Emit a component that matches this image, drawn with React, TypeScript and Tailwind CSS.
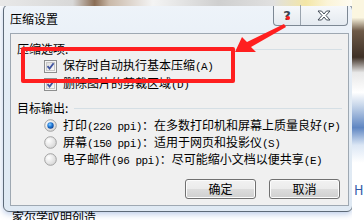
import * as React from "react";

const cjk = "font-[family-name:'Noto_Sans_CJK_SC',sans-serif]";
const mono = "font-[family-name:'Liberation_Mono','Noto_Sans_CJK_SC',monospace] text-[11px] tracking-[-0.5px]";

function CheckBox() {
  return (
    <svg width="13" height="13" viewBox="0 0 13 13" className="shrink-0">
      <defs>
        <linearGradient id="cbg" x1="0" y1="0" x2="1" y2="1">
          <stop offset="0" stopColor="#dcdcdc" />
          <stop offset="1" stopColor="#fbfbfb" />
        </linearGradient>
      </defs>
      <rect x="0.5" y="0.5" width="12" height="12" fill="#f4f4f4" stroke="#8e8f8f" />
      <rect x="2.5" y="2.5" width="8" height="8" fill="url(#cbg)" stroke="#c8c8c8" />
      <path d="M3.5 6.2 L5.6 8.6 L9.6 3.2" fill="none" stroke="#3f54a0" strokeWidth="1.8" />
    </svg>
  );
}

function Radio({ on }: { on?: boolean }) {
  return (
    <svg width="13" height="13" viewBox="0 0 13 13" className="shrink-0">
      <defs>
        <radialGradient id="rdOff" cx="0.35" cy="0.35" r="0.8">
          <stop offset="0" stopColor="#ffffff" />
          <stop offset="1" stopColor="#d0d0d0" />
        </radialGradient>
        <radialGradient id="rdOn" cx="0.4" cy="0.35" r="0.7">
          <stop offset="0" stopColor="#8fd0ff" />
          <stop offset="0.5" stopColor="#1f7ad8" />
          <stop offset="1" stopColor="#0b3c8c" />
        </radialGradient>
      </defs>
      <circle cx="6.5" cy="6.5" r="5.8" fill="url(#rdOff)" stroke="#a2a2a2" />
      {on && <circle cx="6.5" cy="6.5" r="3.2" fill="url(#rdOn)" />}
    </svg>
  );
}

function Button({ label }: { label: string }) {
  return (
    <button className="w-[71px] h-[20px] rounded-[3px] border border-[#707070] bg-[linear-gradient(#f2f2f2_0%,#ebebeb_50%,#dddddd_50%,#cfcfcf_100%)] shadow-[inset_0_0_0_1px_#fcfcfc] flex items-center justify-center text-[12px] text-black leading-none">
      {label}
    </button>
  );
}

function GroupTitle({ text }: { text: string }) {
  return (
    <div className="h-[16px] flex items-center pl-[6px] pr-[6px]">
      <span className="text-[12px] leading-[16px]">{text}</span>
      <div className="flex-1 h-px bg-[#d5dfe5] ml-[6px]" />
    </div>
  );
}

export default function App() {
  return (
    <div className={`relative w-[364px] h-[220px] overflow-hidden bg-white ${cjk} text-black`}>
      {/* desktop behind the dialog */}
      <div className="absolute left-0 top-0 w-[364px] h-[6px] bg-[linear-gradient(90deg,#e8e8e8_0%,#d8d8d8_20%,#8a6d55_26%,#c9b8a8_30%,#f4f4f4_42%,#cfcfcf_60%,#e0e0e0_75%,#f3e6a6_84%,#fbf4d8_90%,#ffffff_100%)]" />
      <div className="absolute right-0 top-0 w-[12px] h-[220px] bg-[linear-gradient(#fbf6e0_0%,#fbf6e0_8%,#6e5a48_14%,#3e3026_26%,#e8e8e8_33%,#ffffff_42%,#c7d6ea_48%,#5f86c2_58%,#dce7f5_66%,#ffffff_74%,#ffffff_100%)]" />
      <div className="absolute left-[354px] top-[183px] text-[13px] leading-none text-[#2f5aa8]">H</div>
      <div className="absolute left-[12px] top-[209px] text-[12px] leading-[16px] text-black">家尔学叹明创造</div>

      {/* dialog window */}
      <div className="ml-[3px] mt-[4px] w-[350px] h-[208px] rounded-[6px] border border-[#5d6a78] bg-[linear-gradient(#eef3f9,#e3ecf5_40%,#dfe9f3)] shadow-[0_2px_6px_rgba(60,110,190,0.35)] flex flex-col">
        <div className="h-[28px] flex items-start">
          <div className="pl-[6px] pt-[6px] text-[12px] leading-[16px]">压缩设置</div>
          <div className="ml-auto mr-[4px] flex h-[21px] rounded-b-[4px] border border-t-0 border-[#7d8894] bg-[linear-gradient(#f7f9fb,#e4eaf0)] overflow-hidden">
            <div className="w-[27px] flex items-center justify-center border-r border-[#9aa4ae] relative">
              <span className="text-[13px] font-bold leading-none text-[#3a4450] font-[family-name:'DejaVu_Sans',sans-serif]">?</span>
              <span className="absolute left-[12px] top-[11px] w-[4px] h-[4px] rounded-full bg-[#ff1a1a]" />
            </div>
            <div className="w-[46px] flex items-center justify-center">
              <svg width="14" height="11" viewBox="0 0 14 11">
                <path
                  d="M1 1 H4.5 L7 4 L9.5 1 H13 L9 5.5 L13 10 H9.5 L7 7 L4.5 10 H1 L5 5.5 Z"
                  fill="#ffffff"
                  stroke="#434c58"
                  strokeWidth="1"
                  strokeLinejoin="round"
                />
              </svg>
            </div>
          </div>
        </div>

        <div className="ml-[6px] mr-[3px] h-[173px] border border-[#9ea8b2] bg-[#f0f0f0] flex flex-col pt-[7px]">
          <GroupTitle text="压缩选项:" />
          <div className="flex flex-col pl-[33px]">
            <div className="h-[18px] flex items-center gap-[6px]">
              <CheckBox />
              <span className="text-[12px] leading-[16px]">
                保存时自动执行基本压缩<span className={mono}>(A)</span>
              </span>
            </div>
            <div className="h-[18px] flex items-center gap-[6px]">
              <CheckBox />
              <span className="text-[12px] leading-[16px]">
                删除图片的剪裁区域<span className={mono}>(D)</span>
              </span>
            </div>
          </div>

          <div className="mt-[7px]">
            <GroupTitle text="目标输出:" />
          </div>
          <div className="flex flex-col pl-[33px] mt-px">
            <div className="h-[17px] flex items-center gap-[6px]">
              <Radio on />
              <span className="text-[12px] leading-[16px] whitespace-nowrap">
                打印<span className={mono}>(220 ppi)</span>：在多数打印机和屏幕上质量良好<span className={mono}>(P)</span>
              </span>
            </div>
            <div className="h-[17px] flex items-center gap-[6px]">
              <Radio />
              <span className="text-[12px] leading-[16px] whitespace-nowrap">
                屏幕<span className={mono}>(150 ppi)</span>：适用于网页和投影仪<span className={mono}>(S)</span>
              </span>
            </div>
            <div className="h-[17px] flex items-center gap-[6px]">
              <Radio />
              <span className="text-[12px] leading-[16px] whitespace-nowrap">
                电子邮件<span className={mono}>(96 ppi)</span>：尽可能缩小文档以便共享<span className={mono}>(E)</span>
              </span>
            </div>
          </div>

          <div className="mt-[11px] flex justify-end gap-[13px] pr-[8px]">
            <Button label="确定" />
            <Button label="取消" />
          </div>
        </div>
      </div>

      {/* annotation: red box + arrow */}
      <div className="absolute left-[21px] top-[47px] w-[214px] h-[36px] border-[4px] border-[#ff1f1f] rounded-[2px]" />
      <svg className="absolute left-0 top-0" width="364" height="220" viewBox="0 0 364 220">
        <polygon points="284,24 286,27 251,47 256,52 235,52 242,37 247,42" fill="#ff1f1f" />
      </svg>
    </div>
  );
}
